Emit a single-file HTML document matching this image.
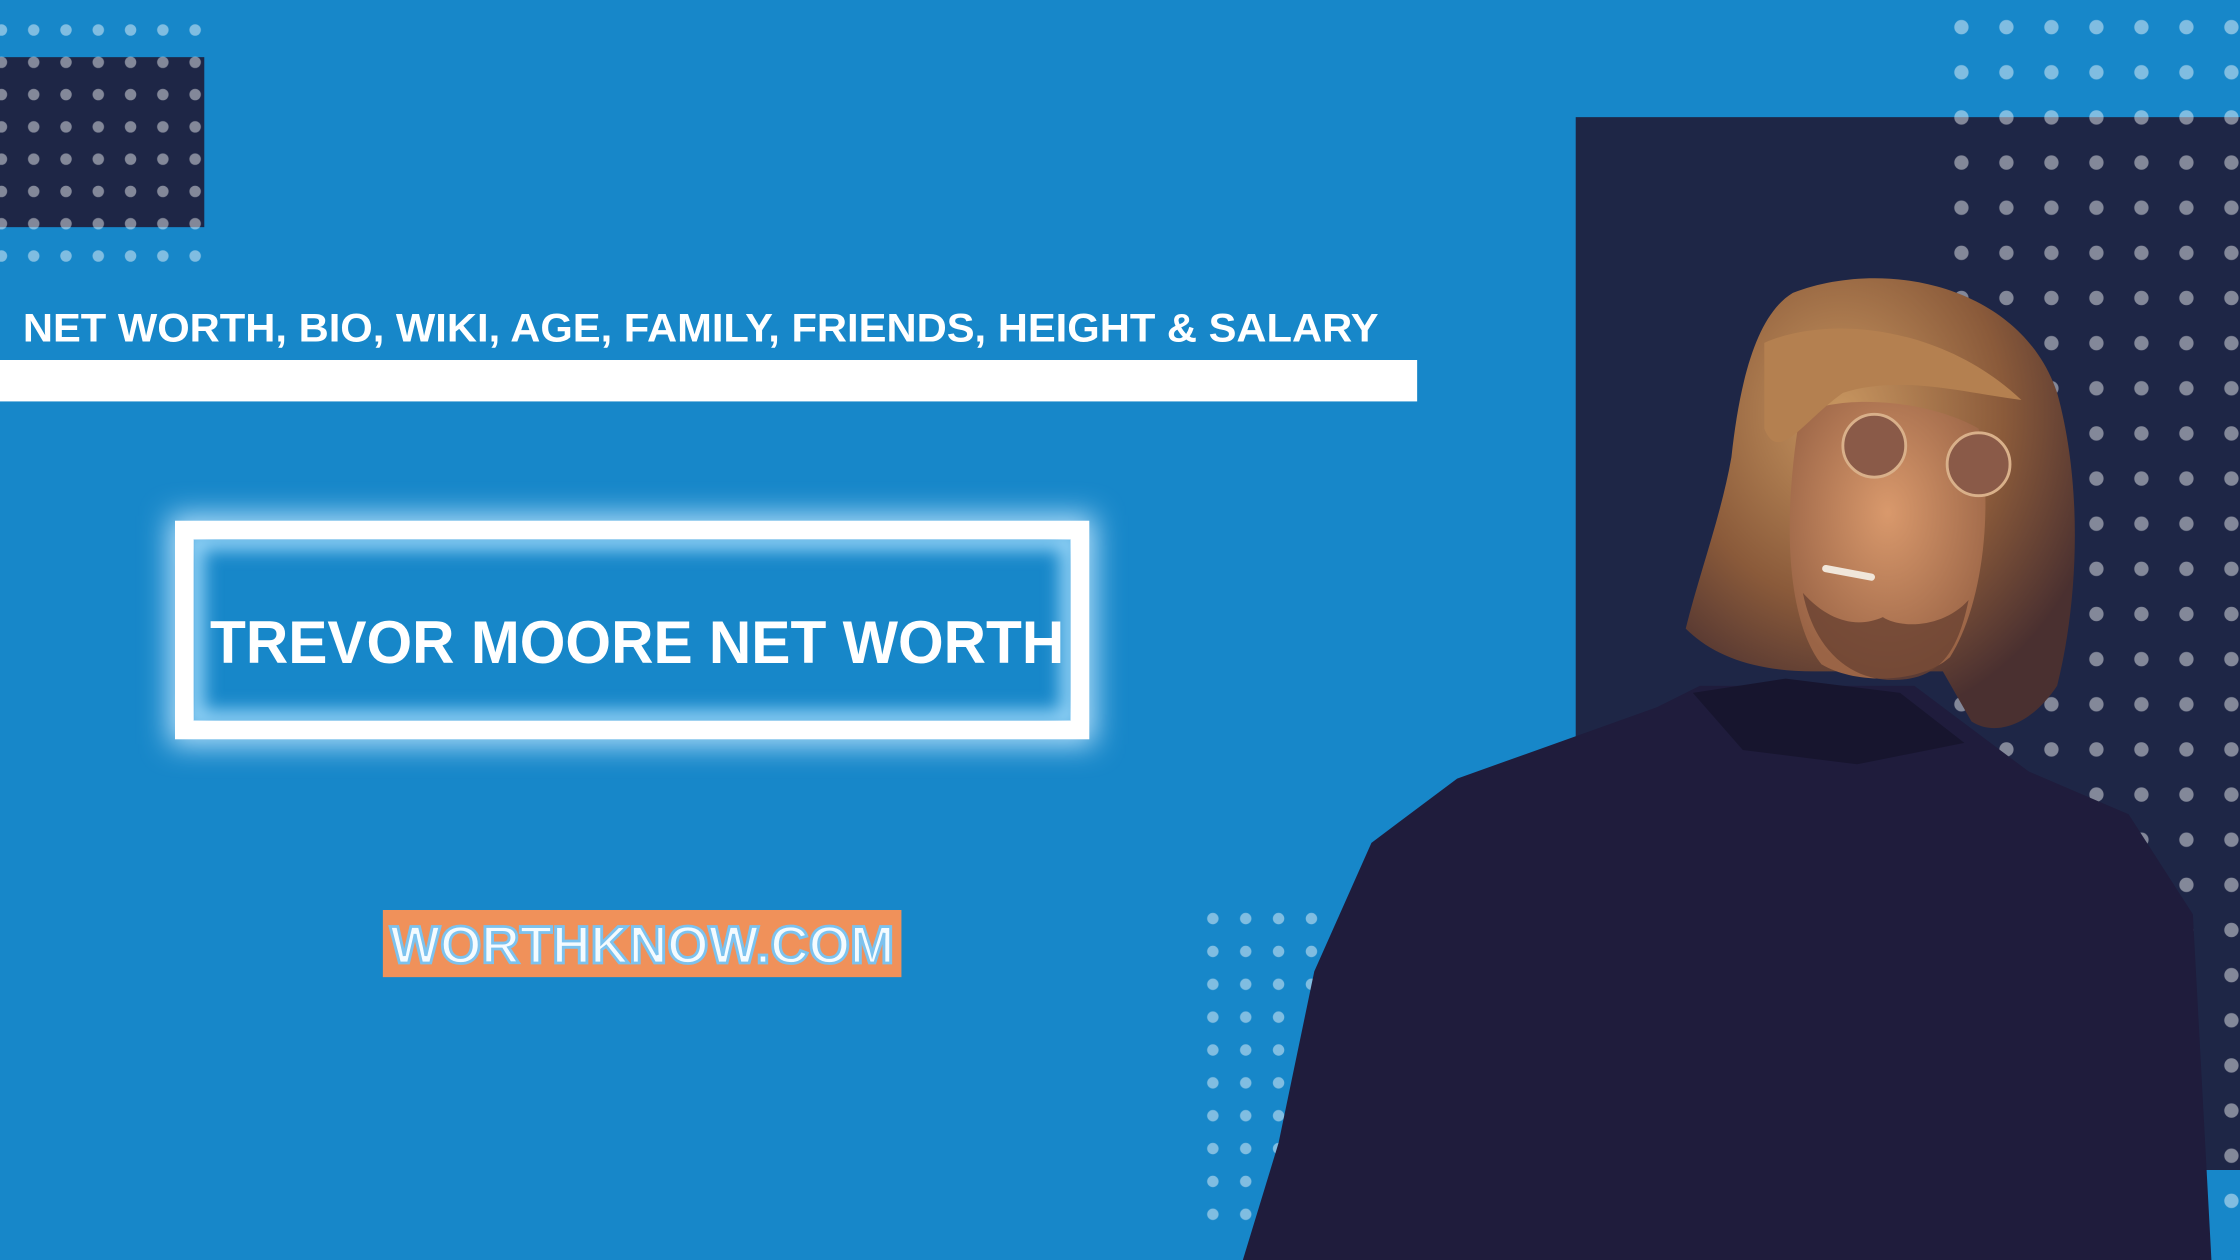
<!DOCTYPE html>
<html><head><meta charset="utf-8"><style>html,body{margin:0;padding:0;background:#1787c9;overflow:hidden}svg{display:block}</style></head>
<body>
<svg width="2240" height="1260" viewBox="0 0 1568 882" preserveAspectRatio="none" xmlns="http://www.w3.org/2000/svg">
<defs>
<pattern id="p1" x="1" y="21" width="22.6" height="22.6" patternUnits="userSpaceOnUse"><circle cx="0" cy="0" r="4" fill="#fff" fill-opacity="0.45"/><circle cx="22.6" cy="0" r="4" fill="#fff" fill-opacity="0.45"/><circle cx="0" cy="22.6" r="4" fill="#fff" fill-opacity="0.45"/><circle cx="22.6" cy="22.6" r="4" fill="#fff" fill-opacity="0.45"/></pattern>
<pattern id="p2" x="1373" y="19" width="31.5" height="31.6" patternUnits="userSpaceOnUse"><circle cx="0" cy="0" r="5" fill="#fff" fill-opacity="0.45"/><circle cx="31.5" cy="0" r="5" fill="#fff" fill-opacity="0.45"/><circle cx="0" cy="31.6" r="5" fill="#fff" fill-opacity="0.45"/><circle cx="31.5" cy="31.6" r="5" fill="#fff" fill-opacity="0.45"/></pattern>
<pattern id="p3" x="849" y="643" width="23" height="23" patternUnits="userSpaceOnUse"><circle cx="0" cy="0" r="4" fill="#fff" fill-opacity="0.45"/><circle cx="23" cy="0" r="4" fill="#fff" fill-opacity="0.45"/><circle cx="0" cy="23" r="4" fill="#fff" fill-opacity="0.45"/><circle cx="23" cy="23" r="4" fill="#fff" fill-opacity="0.45"/></pattern>
<filter id="g" x="-20%" y="-40%" width="140%" height="180%"><feGaussianBlur stdDeviation="10"/></filter>
<filter id="gi" x="-5%" y="-10%" width="110%" height="120%"><feGaussianBlur stdDeviation="6"/></filter>
<radialGradient id="face" cx="50%" cy="40%" r="60%"><stop offset="0" stop-color="#d9996c"/><stop offset="1" stop-color="#9a6446"/></radialGradient>
<radialGradient id="hair" cx="40%" cy="30%" r="70%"><stop offset="0" stop-color="#c89660"/><stop offset="0.6" stop-color="#8a5a3a"/><stop offset="1" stop-color="#4a3030"/></radialGradient>
</defs>
<rect width="1568" height="882" fill="#1787c9"/>
<rect x="0" y="40" width="143" height="119" fill="#1e2646"/>
<rect x="0" y="12" width="145" height="175" fill="url(#p1)"/>
<rect x="1103" y="82" width="465" height="737" fill="#1e2646"/>
<rect x="1360" y="5" width="208" height="850" fill="url(#p2)"/>
<rect x="840" y="635" width="115" height="225" fill="url(#p3)"/>
<text x="16" y="239" font-family="Liberation Sans, sans-serif" font-weight="bold" font-size="28" fill="#fff" textLength="949" lengthAdjust="spacingAndGlyphs">NET WORTH, BIO, WIKI, AGE, FAMILY, FRIENDS, HEIGHT &amp; SALARY</text>
<rect x="0" y="252" width="992" height="29" fill="#fff"/>
<rect x="129" y="371" width="627" height="140" fill="none" stroke="#bfe6ff" stroke-width="20" filter="url(#g)"/>
<rect x="136" y="378" width="613" height="126" fill="#1787c9"/>
<svg x="136" y="378" width="613" height="126"><rect x="0" y="0" width="613" height="126" fill="none" stroke="#8fd0f5" stroke-width="14" filter="url(#gi)"/></svg>
<rect x="129" y="371" width="627" height="140" fill="none" stroke="#fff" stroke-width="13"/>
<text x="147" y="464" font-family="Liberation Sans, sans-serif" font-weight="bold" font-size="42" fill="#fff" textLength="598" lengthAdjust="spacingAndGlyphs">TREVOR MOORE NET WORTH</text>
<rect x="268" y="637" width="363" height="47" fill="#f0915a"/>
<text x="273" y="674" font-family="Liberation Sans, sans-serif" font-weight="bold" font-size="37" fill="#f4fbff" stroke="#7cc2ee" stroke-width="2" textLength="353" lengthAdjust="spacingAndGlyphs">WORTHKNOW.COM</text>
<!-- person -->
<path d="M1190 480 L1340 480 L1420 540 L1490 570 L1535 640 L1548 882 L870 882 L895 800 L920 680 L960 590 L1020 545 L1160 495 Z" fill="#1f1c3c"/>
<path d="M1185 485 L1250 475 L1330 485 L1375 520 L1300 535 L1220 525 Z" fill="#17152e"/>
<path d="M1255 205 C1320 180 1415 200 1440 275 C1458 340 1455 420 1440 480 C1420 510 1395 515 1380 505 L1360 470 L1270 470 C1230 470 1200 460 1180 440 C1190 400 1205 360 1212 320 C1218 265 1230 220 1255 205 Z" fill="url(#hair)"/>
<path d="M1260 290 C1290 275 1350 280 1385 300 C1395 350 1390 420 1365 460 C1345 478 1300 480 1275 465 C1255 440 1245 380 1260 290 Z" fill="url(#face)"/>
<path d="M1262 415 C1270 455 1295 476 1325 476 C1355 476 1370 460 1378 420 C1360 440 1330 440 1318 432 C1300 440 1280 435 1262 415 Z" fill="#6a4232" opacity="0.8"/>
<path d="M1235 240 C1280 220 1360 228 1415 280 C1375 275 1330 262 1290 275 C1262 295 1245 325 1235 300 Z" fill="#b48050"/>
<circle cx="1312" cy="312" r="22" fill="#8a5a48" stroke="#d9b08a" stroke-width="2"/>
<circle cx="1385" cy="325" r="22" fill="#8a5a48" stroke="#d9b08a" stroke-width="2"/>
<line x1="1278" y1="398" x2="1310" y2="404" stroke="#f0e6da" stroke-width="5" stroke-linecap="round"/>
</svg>
</body></html>
